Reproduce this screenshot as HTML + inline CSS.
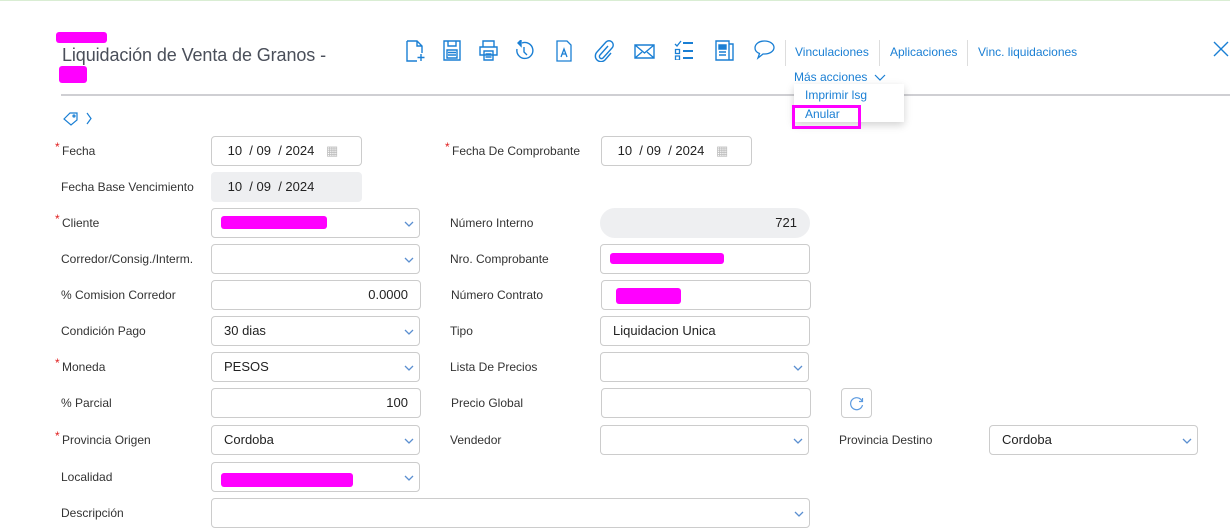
<!DOCTYPE html>
<html><head><meta charset="utf-8"><style>
*{box-sizing:border-box;margin:0;padding:0}
body{width:1230px;height:516px;overflow:hidden;background:#fff;font-family:"Liberation Sans",sans-serif;position:relative;color:#333}
.a{position:absolute}
.l{position:absolute;font-size:12px;color:#333;white-space:nowrap}
.req:before{content:"*";color:#e02020;position:absolute;left:-7px;top:-4px;font-size:12px}
.f{position:absolute;height:30px;border:1px solid #ccc;border-radius:4px;background:#fff;font-size:13px;color:#222;line-height:28px;padding:0 12px}
.f.r{text-align:right}
.f.g{background:#eeeff1;border-color:#eeeff1}
.mg{position:absolute;background:#f0f;border-radius:3px}
.ic{position:absolute;top:40px}
.lk{position:absolute;font-size:12px;color:#1a7fd4;top:45px}
.sep{position:absolute;top:40px;width:1px;height:26px;background:#ddd}
</style></head><body>
<div class="a" style="left:0;top:0;width:1230px;height:1px;background:#d9edd3"></div>
<div class="mg" style="left:56px;top:32px;width:51px;height:11px"></div>
<div class="a" style="left:62px;top:45px;font-size:18px;color:#4a4f5a;letter-spacing:-0.1px">Liquidación de Venta de Granos -</div>
<div class="mg" style="left:59px;top:66px;width:28px;height:17px"></div>
<div class="a" style="left:61px;top:94px;width:1169px;height:2px;background:#cfcfd3"></div>

<svg class="ic" style="left:406px" width="20" height="22" viewBox="0 0 20 22" fill="none" stroke="#1a7fd4" stroke-width="1.4"><path d="M1 1h10l5 5v7M1 1v20h10M11 1v5h5M15 14v7M11.5 17.5h7"/></svg>
<svg class="ic" style="left:443px" width="18" height="21" viewBox="0 0 18 21" fill="none" stroke="#1a7fd4" stroke-width="1.4"><path d="M1 1h16v19H1zM5 1v5h8V1M4 10h10v8H4zM5 12.5h8M5 15h8"/></svg>
<svg class="ic" style="left:479px" width="19" height="21" viewBox="0 0 19 21" fill="none" stroke="#1a7fd4" stroke-width="1.4"><path d="M4 7V1h11v6M1 7h17v8H1zM5 11h9v9H5zM6.5 14h6M6.5 17h6"/></svg>
<svg class="ic" style="left:515px" width="19" height="21" viewBox="0 0 19 21" fill="none" stroke="#1a7fd4" stroke-width="1.4"><path d="M7 3A8 8 0 1 1 2 9M9 7v5l3 3"/><path d="M6 0v6l-3-3z" fill="#1a7fd4"/></svg>
<svg class="ic" style="left:556px" width="16" height="22" viewBox="0 0 16 22" fill="none" stroke="#1a7fd4" stroke-width="1.3"><path d="M1 1h10l4 4v16H1zM5 17l3-8 3 8M6 14h4"/></svg>
<svg class="ic" style="left:594px" width="20" height="22" viewBox="0 0 20 22" fill="none" stroke="#1a7fd4" stroke-width="1.4"><path d="M14 6l-8 9a2 2 0 0 0 3 3l9-10a4 4 0 0 0-6-6L3 12a5.5 5.5 0 0 0 8 8l6-7"/></svg>
<svg class="ic" style="left:634px;top:44px" width="21" height="15" viewBox="0 0 21 15" fill="none" stroke="#1a7fd4" stroke-width="1.4"><path d="M1 1h19v13H1zM1 1l9.5 8L20 1M1 14l7-6M20 14l-7-6"/></svg>
<svg class="ic" style="left:674px" width="20" height="20" viewBox="0 0 20 20" fill="none" stroke="#1a7fd4" stroke-width="1.3"><path d="M1 4l2 2 4-5M1.5 9.5h4v4h-4zM1.5 16h4v4h-4z"/><path d="M9 3h10M9 11h10M9 18h10" stroke-width="2"/></svg>
<svg class="ic" style="left:715px" width="19" height="21" viewBox="0 0 19 21" fill="none" stroke="#1a7fd4" stroke-width="1.4"><path d="M1 1h13v19H1zM14 4h4v16H5"/><path d="M4 5h7v4H4z" fill="#1a7fd4"/><path d="M4 12h7M4 15h7"/></svg>
<svg class="ic" style="left:754px" width="21" height="20" viewBox="0 0 21 20" fill="none" stroke="#1a7fd4" stroke-width="1.3"><path d="M10.5 1C5 1 1 4 1 8c0 2.5 1.8 4.5 4.5 5.5L4 18l5-4h1.5C16 14 20 11 20 7.5S16 1 10.5 1z"/></svg>

<div class="sep" style="left:785px"></div>
<div class="lk" style="left:795px">Vinculaciones</div>
<div class="sep" style="left:879px"></div>
<div class="lk" style="left:890px">Aplicaciones</div>
<div class="sep" style="left:967px"></div>
<div class="lk" style="left:978px">Vinc. liquidaciones</div>
<svg class="a" style="left:1213px;top:41px" width="16" height="16" viewBox="0 0 16 16" stroke="#1a7fd4" stroke-width="1.4"><path d="M1 1l14 14M15 1L1 15"/></svg>
<div class="lk" style="left:794px;top:70px">Más acciones</div>
<svg class="a" style="left:874px;top:74px" width="12" height="8" viewBox="0 0 12 8" fill="none" stroke="#1a7fd4" stroke-width="1.2"><path d="M1 1l5 5 5-5"/></svg>
<div class="a" style="left:794px;top:84px;width:110px;height:38px;background:#fff;box-shadow:0 3px 8px rgba(0,0,0,.18)"></div>
<div class="lk" style="left:805px;top:88px">Imprimir lsg</div>
<div class="lk" style="left:805px;top:107px">Anular</div>
<div class="a" style="left:792px;top:105px;width:69px;height:24px;border:3px solid #f0f"></div>

<svg class="a" style="left:63px;top:112px" width="16" height="14" viewBox="0 0 16 14" fill="none" stroke="#1a7fd4" stroke-width="1.2"><path d="M1 7l6-6h7v7l-6 5z"/><circle cx="11" cy="4" r="1"/></svg>
<svg class="a" style="left:86px;top:112px" width="6" height="13" viewBox="0 0 6 13" fill="none" stroke="#1a7fd4" stroke-width="1.2"><path d="M1 1l4 5.5L1 12"/></svg>

<div class="l req" style="left:62px;top:144px">Fecha</div>
<div class="f" style="left:211px;top:136px;width:151px">&nbsp;10 &nbsp;/ 09 &nbsp;/ 2024 <span style="color:#bbb;margin-left:8px">▦</span></div>
<div class="l" style="left:61px;top:180px">Fecha Base Vencimiento</div>
<div class="f g" style="left:211px;top:172px;width:151px">&nbsp;10 &nbsp;/ 09 &nbsp;/ 2024</div>
<div class="l req" style="left:62px;top:216px">Cliente</div>
<div class="f" style="left:211px;top:208px;width:209px"><div class="mg" style="left:9px;top:7px;width:106px;height:13px"></div></div>
<div class="l" style="left:61px;top:252px">Corredor/Consig./Interm.</div>
<div class="f" style="left:211px;top:244px;width:209px"></div>
<div class="l" style="left:61px;top:288px">% Comision Corredor</div>
<div class="f r" style="left:211px;top:280px;width:210px">0.0000</div>
<div class="l" style="left:61px;top:324px">Condición Pago</div>
<div class="f" style="left:211px;top:316px;width:209px">30 dias</div>
<div class="l req" style="left:62px;top:360px">Moneda</div>
<div class="f" style="left:211px;top:352px;width:209px">PESOS</div>
<div class="l" style="left:61px;top:396px">% Parcial</div>
<div class="f r" style="left:211px;top:388px;width:210px">100</div>
<div class="l req" style="left:62px;top:433px">Provincia Origen</div>
<div class="f" style="left:211px;top:425px;width:209px">Cordoba</div>
<div class="l" style="left:61px;top:470px">Localidad</div>
<div class="f" style="left:211px;top:462px;width:209px"><div class="mg" style="left:9px;top:10px;width:132px;height:14px"></div></div>
<div class="l" style="left:61px;top:506px">Descripción</div>
<div class="f" style="left:211px;top:498px;width:599px"></div>

<div class="l req" style="left:452px;top:144px">Fecha De Comprobante</div>
<div class="f" style="left:601px;top:136px;width:151px">&nbsp;10 &nbsp;/ 09 &nbsp;/ 2024 <span style="color:#bbb;margin-left:8px">▦</span></div>
<div class="l" style="left:450px;top:216px">Número Interno</div>
<div class="f g r" style="left:600px;top:208px;width:210px;border-radius:15px">721</div>
<div class="l" style="left:450px;top:252px">Nro. Comprobante</div>
<div class="f" style="left:600px;top:244px;width:210px"><div class="mg" style="left:9px;top:8px;width:114px;height:11px"></div></div>
<div class="l" style="left:451px;top:288px">Número Contrato</div>
<div class="f" style="left:601px;top:280px;width:210px"><div class="mg" style="left:14px;top:7px;width:65px;height:16px"></div></div>
<div class="l" style="left:450px;top:324px">Tipo</div>
<div class="f" style="left:600px;top:316px;width:210px">Liquidacion Unica</div>
<div class="l" style="left:450px;top:360px">Lista De Precios</div>
<div class="f" style="left:600px;top:352px;width:209px"></div>
<div class="l" style="left:451px;top:396px">Precio Global</div>
<div class="f" style="left:601px;top:388px;width:210px"></div>
<div class="f" style="left:841px;top:388px;width:31px;padding:0"><svg class="a" style="left:7px;top:7px" width="16" height="15" viewBox="0 0 16 15" fill="none" stroke="#5b9ae0" stroke-width="1.2"><path d="M13 5A6 6 0 1 0 13.5 9M13.5 2v3.5H10"/></svg></div>
<div class="l" style="left:450px;top:433px">Vendedor</div>
<div class="f" style="left:600px;top:425px;width:209px"></div>
<div class="l" style="left:839px;top:433px">Provincia Destino</div>
<div class="f" style="left:989px;top:425px;width:209px">Cordoba</div>

<div id="chevs"></div>
<script>
var pos=[[420,208],[420,244],[420,316],[420,352],[420,425],[420,462],[810,498],[809,352],[809,425],[1198,425]];
var h='';pos.forEach(function(p){h+='<svg class="a" style="left:'+(p[0]-16)+'px;top:'+(p[1]+13)+'px" width="10" height="6" viewBox="0 0 10 6" fill="none" stroke="#5b8fd0" stroke-width="1.3"><path d="M1 1l4 4 4-4"/></svg>';});
document.getElementById('chevs').innerHTML=h;
</script>
</body></html>
